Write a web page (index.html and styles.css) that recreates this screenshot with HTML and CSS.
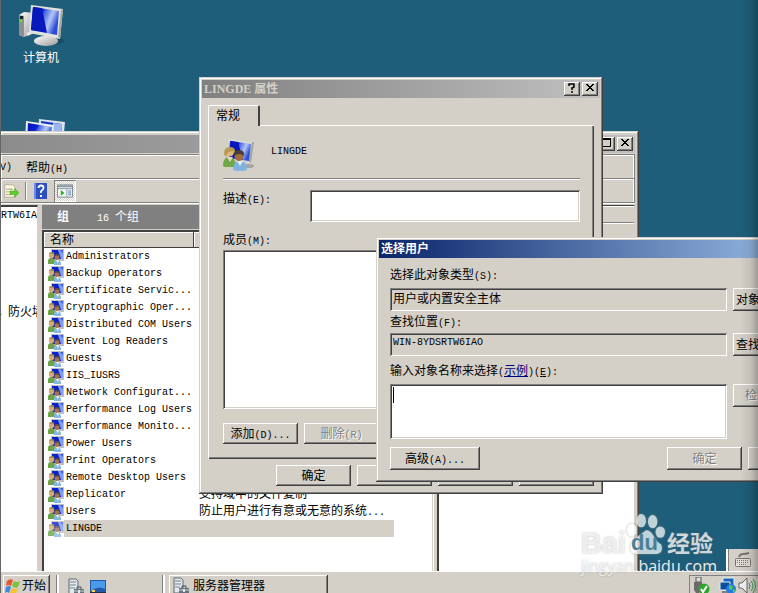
FILE: index.html
```html
<!DOCTYPE html>
<html lang="zh-CN">
<head>
<meta charset="utf-8">
<title>服务器管理器</title>
<link rel="stylesheet" href="styles.css">
</head>
<body>
<svg class="defs" aria-hidden="true">
  <defs>
    <linearGradient id="screen" x1="0" y1="0" x2="1" y2="0.4">
      <stop offset="0" stop-color="#0414a8"/><stop offset="0.42" stop-color="#0a22d8"/>
      <stop offset="0.46" stop-color="#3a5ae0"/><stop offset="0.75" stop-color="#b4c6f6"/><stop offset="1" stop-color="#2a4cd8"/>
    </linearGradient>
    <linearGradient id="metal" x1="0" y1="0" x2="1" y2="1">
      <stop offset="0" stop-color="#fff"/><stop offset="1" stop-color="#9a9a9a"/>
    </linearGradient>
    <symbol id="monitor" viewBox="0 0 46 42">
      <path d="M1 10l5-3 11 1v20l-11 4-5-2z" fill="url(#metal)"/>
      <path d="M1 10l5 1v21l-5-2z" fill="#8d9090"/>
      <path d="M2 11h3v3H2z" fill="#222"/><circle cx="2.800" cy="16" r="1.500" fill="#62e21c"/>
      <path d="M8 28l6-2 2 1-6 4z" fill="#e8e8e8"/>
      <ellipse cx="33" cy="36" rx="13" ry="4" fill="#123e55" opacity=".55"/>
      <path d="M26 29l10 2-1 6h-8z" fill="#c8c8c8"/>
      <ellipse cx="28" cy="36" rx="12" ry="5" fill="url(#metal)"/>
      <path d="M13 0l32 4-3 30-31-6z" fill="#e2e2dc"/>
      <path d="M45 4l-3 30-2-2 3-27z" fill="#a6a6a0"/>
      <path d="M15 2l26 4-2 24-26-5z" fill="url(#screen)"/>
      <path d="M15 2l9 1 5 25-16-3z" fill="#0718bc"/>
    </symbol>
    <symbol id="group" viewBox="0 0 32 32">
      <path d="M5 0l26 3-3 21-19-3z" fill="#d9d9d4"/>
      <path d="M31 3l-3 21-2-1 3-20z" fill="#a3a39d"/>
      <path d="M7 2l21 3-2 17-20-3z" fill="url(#screen)"/>
      <path d="M7 2l8 1 5 18-13-2z" fill="#0718bc"/>
      <ellipse cx="26" cy="27" rx="5" ry="2" fill="#a8a59e"/>
      <path d="M0 27q0-9 6-9t7 8v2H1z" fill="#72a84a"/>
      <path d="M4 18l3 5 3-5z" fill="#e6dcb4"/>
      <circle cx="6.500" cy="13" r="4.500" fill="#dfb785"/>
      <path d="M1 15q0-7 6-7t5 6l-2-2q-4 0-6 3l-1 3z" fill="#b99a4e"/>
      <path d="M10 31q0-9 7-9t7 9q-7 2-14 0z" fill="#7eb2df"/>
      <path d="M14 22l3 5 3-5z" fill="#e3eef8"/>
      <circle cx="16" cy="17.500" r="4.500" fill="#a06d43"/>
      <path d="M11 17q-1-6 5-6t5 6q-4-4-10 0z" fill="#4a4038"/>
    </symbol>
    <symbol id="group-small" viewBox="0 0 16 16">
      <path d="M3 0h13v12H4z" fill="#bfc0c4"/>
      <path d="M4 1h11v9H4z" fill="#0c22c4"/><path d="M10 1h5v9h-2z" fill="#7f9cf0"/><path d="M12 1h3v3z" fill="#3a5ae0"/>
      <path d="M0 15v-3q0-3 3-3t4 3v3z" fill="#6fa346"/>
      <circle cx="3.500" cy="6.500" r="2.700" fill="#d3ab76"/>
      <path d="M1 5q0-2 3-2t2 2q-3-1-5 0z" fill="#99813f"/>
      <path d="M6 16v-2q0-3 3-3t4 3v2z" fill="#86b8e4"/><path d="M8 11h3l-1 3z" fill="#f0f5fa"/>
      <circle cx="9" cy="8.500" r="2.500" fill="#a5744c"/>
      <path d="M6 7q0-2 3-2t3 2q-3-1-6 0z" fill="#5a4a3c"/>
    </symbol>
    <symbol id="server" viewBox="0 0 16 18">
      <path d="M1 1h7l2 2v13H1z" fill="#e4e8ea" stroke="#5d6870"/>
      <path d="M2 4h6M2 7h6M2 10h5" stroke="#768491"/>
      <path d="M6 11h10v6H6z" fill="#66737e"/>
      <path d="M9 11V9h4v2" fill="none" stroke="#434e58"/>
      <path d="M6 13h10" stroke="#c5d2dc"/><path d="M10 12h2v3h-2z" fill="#e2e8ec"/>
    </symbol>
    <symbol id="close" viewBox="0 0 12 10"><path d="M2 1l7 7M3 1l7 7M9 1L2 8M10 1L3 8" stroke="#000" fill="none"/></symbol>
  </defs>
</svg>

<main class="desktop">
  <div class="shortcut shortcut-computer"><svg class="icon-large"><use href="#monitor"/></svg><span>计算机</span></div>
  <svg class="shortcut-network" viewBox="0 0 40 24" aria-hidden="true">
    <path d="M14 0l26 3-2 21H13z" fill="#dfe3ea"/><path d="M16 2l21 3-1 19H16z" fill="#1636c8"/><path d="M28 4l9 1-1 19h-8z" fill="#9cb7ee"/>
    <path d="M1 2l28 4-2 18H0z" fill="#eceee8"/><path d="M3 4l24 4-2 16H2z" fill="url(#screen)"/>
  </svg>

  <section class="window manager" aria-label="服务器管理器">
    <header class="titlebar inactive">
      <button class="cap" aria-label="最大化"><svg viewBox="0 0 12 10"><path d="M1.500 0v8.500h8V0" fill="none" stroke="#000"/><path d="M1 1h9" stroke="#000" stroke-width="2"/></svg></button>
      <button class="cap cap-last" aria-label="关闭"><svg><use href="#close"/></svg></button>
    </header>
    <div class="bars">
      <nav class="menubar"><span class="en">V)</span><span>帮助<span class="en">(H)</span></span></nav>
      <div class="toolbar">
        <button class="tool" aria-label="导出列表"><svg viewBox="0 0 18 16"><path d="M2 1h9l3 3v11H2z" fill="#fff9df" stroke="#aaa79b"/><path d="M4 6h1M4 9h1M4 12h1" stroke="#222"/><path d="M6 6h5M6 9h3M6 12h3" stroke="#8e8470"/><path d="M8 8h5V5l5 5-5 5v-3H8z" fill="#5ccc26" stroke="#37941b" stroke-width=".5"/></svg></button>
        <span class="tool-split"></span>
        <button class="tool" aria-label="帮助"><svg viewBox="0 0 14 16"><path d="M0 0h13v16H0z" fill="#2d4fc0"/><path d="M0 0h2v16H0z" fill="#6f8ce6"/><path d="M4.500 5q0-2.500 2.500-2.500t2.500 2.300q0 1.500-1.500 2.500t-1 2.700" fill="none" stroke="#fff" stroke-width="1.800"/><path d="M6 12h2v2H6z" fill="#fff"/></svg></button>
        <button class="tool pressed" aria-label="显示操作窗格"><svg viewBox="0 0 17 14"><path d="M.5.5h16v13H.5z" fill="#f4f4f0" stroke="#7d858d"/><path d="M1 1h15v2H1z" fill="#8795a4"/><path d="M1 4.500h15M10.500 5v8" stroke="#8795a4"/><path d="M4 6l4 3-4 3z" fill="#35ae28"/><path d="M12 7h3M12 9h3M12 11h3" stroke="#3a78c9"/></svg></button>
      </div>
    </div>
    <div class="panes">
      <aside class="tree"><p class="en">RTW6IA</p><p class="firewall"><span class="en">s </span>防火墙</p></aside>
      <section class="result">
        <h2 class="result-head"><b>组</b><span><span class="en">16 </span>个组</span></h2>
        <div class="list">
          <table>
            <colgroup><col class="c-icon"><col class="c-name"><col class="c-desc"><col></colgroup>
            <thead><tr><th colspan="2">名称</th><th></th><th></th></tr></thead>
            <tbody>
              <tr><td><svg><use href="#group-small"/></svg></td><td class="en">Administrators</td><td></td><td></td></tr>
              <tr><td><svg><use href="#group-small"/></svg></td><td class="en">Backup Operators</td><td></td><td></td></tr>
              <tr><td><svg><use href="#group-small"/></svg></td><td class="en">Certificate Servic...</td><td></td><td></td></tr>
              <tr><td><svg><use href="#group-small"/></svg></td><td class="en">Cryptographic Oper...</td><td></td><td></td></tr>
              <tr><td><svg><use href="#group-small"/></svg></td><td class="en">Distributed COM Users</td><td></td><td></td></tr>
              <tr><td><svg><use href="#group-small"/></svg></td><td class="en">Event Log Readers</td><td></td><td></td></tr>
              <tr><td><svg><use href="#group-small"/></svg></td><td class="en">Guests</td><td></td><td></td></tr>
              <tr><td><svg><use href="#group-small"/></svg></td><td class="en">IIS_IUSRS</td><td></td><td></td></tr>
              <tr><td><svg><use href="#group-small"/></svg></td><td class="en">Network Configurat...</td><td></td><td></td></tr>
              <tr><td><svg><use href="#group-small"/></svg></td><td class="en">Performance Log Users</td><td></td><td></td></tr>
              <tr><td><svg><use href="#group-small"/></svg></td><td class="en">Performance Monito...</td><td></td><td></td></tr>
              <tr><td><svg><use href="#group-small"/></svg></td><td class="en">Power Users</td><td></td><td></td></tr>
              <tr><td><svg><use href="#group-small"/></svg></td><td class="en">Print Operators</td><td></td><td></td></tr>
              <tr><td><svg><use href="#group-small"/></svg></td><td class="en">Remote Desktop Users</td><td></td><td></td></tr>
              <tr><td><svg><use href="#group-small"/></svg></td><td class="en">Replicator</td><td>支持域中的文件复制</td><td></td></tr>
              <tr><td><svg><use href="#group-small"/></svg></td><td class="en">Users</td><td>防止用户进行有意或无意的系统<span class="en">...</span></td><td></td></tr>
              <tr class="selected"><td><svg><use href="#group-small"/></svg></td><td class="en">LINGDE</td><td></td><td></td></tr>
            </tbody>
          </table>
        </div>
      </section>
      <aside class="actions"><div class="actions-bar"></div><div class="actions-bar"></div></aside>
    </div>
  </section>

  <section class="window properties" role="dialog" aria-labelledby="prop-title">
    <header class="titlebar inactive">
      <h1 id="prop-title"><span class="en">LINGDE </span>属性</h1>
      <button class="cap" aria-label="帮助"><svg viewBox="0 0 12 10"><path d="M3 3V1h5v3L6 5v2M6 8v2" stroke="#000" stroke-width="1.500" fill="none"/></svg></button>
      <button class="cap cap-last" aria-label="关闭"><svg><use href="#close"/></svg></button>
    </header>
    <div class="prop-body">
      <button class="tab" role="tab" aria-selected="true">常规</button>
      <div class="panel">
        <div class="group-head"><svg><use href="#group"/></svg><span class="en">LINGDE</span></div>
        <div class="field-row"><label for="desc">描述<span class="en">(E):</span></label><input id="desc" class="sunken" type="text"></div>
        <label class="members-label" for="members">成员<span class="en">(M):</span></label>
        <select id="members" class="sunken members" size="8"></select>
        <div class="buttons"><button class="btn">添加<span class="en">(D)...</span></button><button class="btn" disabled>删除<span class="en">(R)</span></button></div>
      </div>
      <footer class="buttons prop-footer"><button class="btn">确定</button><button class="btn" aria-label="取消"></button><button class="btn" aria-label="应用"></button><button class="btn" aria-label="帮助"></button></footer>
    </div>
  </section>

  <section class="window picker" role="dialog" aria-labelledby="pick-title">
    <header class="titlebar active"><h1 id="pick-title">选择用户</h1></header>
    <div class="picker-body">
      <label for="otype">选择此对象类型<span class="en">(S):</span></label>
      <div class="picker-row type-row"><input id="otype" class="sunken readonly" readonly value="用户或内置安全主体"><button class="btn btn-wide">对象类型<span class="en">(O)...</span></button></div>
      <label for="loc">查找位置<span class="en">(F):</span></label>
      <div class="picker-row"><input id="loc" class="sunken readonly en" readonly value="WIN-8YDSRTW6IAO"><button class="btn btn-wide">查找范围<span class="en">(L)...</span></button></div>
      <label class="names-label" for="names">输入对象名称来选择<span class="en">(</span><a href="#names">示例</a><span class="en">)(<u>E</u>):</span></label>
      <div class="picker-row names-row"><div class="names-box"><textarea id="names" class="sunken"></textarea><i class="caret"></i></div><button class="btn btn-wide" disabled>检查名称<span class="en">(C)</span></button></div>
      <footer class="buttons"><button class="btn btn-wide">高级<span class="en">(A)...</span></button><button class="btn push" disabled>确定</button><button class="btn" aria-label="取消"></button></footer>
    </div>
  </section>

  <div class="langbar"><svg viewBox="0 0 18 16" aria-label="键盘"><path d="M5 5q1-3 4-3t6-1" fill="none" stroke="#77746e" stroke-width="2"/><rect x="1.500" y="6.500" width="15" height="8" rx="1" fill="#e2dfd8" stroke="#77746e"/><path d="M3 8.500h12M3 10.500h12M5 12.500h8" stroke="#77746e" stroke-dasharray="1 1"/></svg></div>
</main>

<footer class="taskbar">
  <button class="task start"><svg viewBox="0 0 16 16"><path d="M2 3q3-3 6-1L6 8Q3 6 1 8z" fill="#e8562a"/><path d="M9 3q3 2 6 0l-2 6q-3 2-6-1z" fill="#7cc142"/><path d="M1 9q3-2 5 0l-2 6q-2-2-4 0z" fill="#3f88dc"/><path d="M7 10q3 2 6 0l-2 5q-3 2-6 0z" fill="#f6c12b"/></svg>开始</button>
  <div class="quick"><svg class="srv"><use href="#server"/></svg><svg class="desk" viewBox="0 0 16 14"><path d="M0 0h16v14H0z" fill="#2559a7"/><path d="M1 1h14v8Q8 5 1 11z" fill="#4b9ae8"/><path d="M0 12h16v2H0z" fill="#222f48"/><path d="M2 10h3v2H2z" fill="#ffd84a"/></svg></div>
  <button class="task app"><svg class="srv"><use href="#server"/></svg>服务器管理器</button>
  <div class="tray">
    <svg viewBox="0 0 18 18"><path d="M4 0h5v5H4z" fill="#ddd" stroke="#555"/><path d="M2 5h8v8l-3 3H4l-2-3z" fill="#6b6b6b"/><circle cx="12" cy="12" r="5.500" fill="#2ea52b"/><path d="M9 12l2 3 4-6" fill="none" stroke="#fff" stroke-width="2"/></svg>
    <svg class="net" viewBox="0 0 18 18"><path d="M4 1h11v8H4z" fill="#1767bd" stroke="#e6eef6"/><path d="M1 5h10v8H1z" fill="#0a4f9f" stroke="#e6eef6"/><path d="M3 15h6" stroke="#234"/><circle cx="12" cy="12" r="5" fill="#227be0"/><path d="M10 8l4 1-1 4-3-1zM14 12l3 1-3 3z" fill="#4fcb42"/></svg>
    <svg viewBox="0 0 18 18"><path d="M1 6h3l5-5v15l-5-5H1z" fill="#f3f3f3" stroke="#666"/><path d="M11 6q2 3 0 6M13 4q4 5 0 10M15 2q5 7 0 14" fill="none" stroke="#3b9c50"/></svg>
  </div>
</footer>
<div class="watermark">
  <div class="wm-logo"><span>Bai</span>
    <svg viewBox="0 0 42 44" aria-hidden="true"><g fill="#fff"><ellipse cx="16" cy="8" rx="5" ry="7"/><ellipse cx="28" cy="9" rx="5" ry="7"/><ellipse cx="6" cy="18" rx="5" ry="7"/><ellipse cx="36" cy="20" rx="5" ry="6"/><path d="M21 18q5 0 8 6t8 9q3 10-7 10H12q-9 0-7-10 2-4 7-8t9-7z"/></g></svg>
    <b class="du">du</b><span class="wm-cn">经验</span></div>
  <div class="wm-url">jingyan<span class="wm-domain">.baidu.com</span></div>
</div>
<div class="edge-shade"></div>
</body>
</html>
```
FILE: styles.css
```css
* { box-sizing: border-box; }

:root {
  --face: #d4d0c8;
  --shadow: #808080;
  --dark: #404040;
  --raised: inset -1px -1px var(--dark), inset 1px 1px #fff, inset -2px -2px var(--shadow);
}

body {
  margin: 0;
  height: 100vh;
  display: flex;
  flex-direction: column;
  overflow: hidden;
  position: relative;
  background: #1e5e7a;
  color: #000;
  font: 12px/18px "Liberation Sans", "Noto Sans CJK SC", sans-serif;
  white-space: nowrap;
}

button, input, select, textarea { font: inherit; color: inherit; margin: 0; border: 0; border-radius: 0; outline: 0; }
h1, h2, p { margin: 0; font-size: 12px; font-weight: normal; }
svg { display: block; flex: none; }
.defs { position: absolute; width: 0; height: 0; }
.en { font-family: "Liberation Mono", monospace; font-size: 10px; white-space: pre; }
span.en { line-height: 10px; }

.desktop { position: relative; flex: 1; min-height: 0; overflow: hidden; }

/* Desktop shortcuts */
.shortcut { position: absolute; display: flex; flex-direction: column; align-items: center; gap: 2px; color: #fff; }
.shortcut-computer { left: 18px; top: 5px; }
.icon-large { width: 46px; height: 42px; }
.shortcut-network { position: absolute; left: 25px; top: 119px; width: 40px; height: 24px; }

/* Window frame */
.window {
  position: absolute;
  display: flex;
  flex-direction: column;
  padding: 3px;
  background: var(--face);
  box-shadow: inset -1px -1px var(--dark), inset 1px 1px var(--face), inset -2px -2px var(--shadow), inset 2px 2px #fff;
}
.titlebar { display: flex; align-items: center; height: 18px; flex: none; padding: 0 2px; }
.titlebar h1 { flex: 1; font-weight: bold; }
.titlebar h1 .en { font-size: 12px; font-family: "Liberation Serif", serif; }
.inactive { background: linear-gradient(90deg, #808080, #c0c0c0); color: var(--face); justify-content: flex-end; }
.active { background: linear-gradient(90deg, #0a246a, #a6caf0); color: #fff; }
.cap { width: 16px; height: 14px; padding: 1px 2px 3px; background: var(--face); box-shadow: var(--raised); }
.cap svg { width: 12px; height: 10px; }
.cap-last { margin-left: 2px; }

/* Server manager */
.manager { left: 0; top: 131px; width: 639px; bottom: -4px; padding: 4px 4px 4px 0; }
.manager .inactive { background: linear-gradient(90deg, #8b8b8b, #c0c0c0); }
.bars { margin: 1px 0 2px; border: 1px solid var(--shadow); border-left: 0; box-shadow: inset -1px 1px #fff, 0 1px #fff; }
.menubar { display: flex; gap: 14px; height: 24px; padding-top: 4px; border-bottom: 1px solid var(--shadow); }
.menubar > .en { line-height: 18px; }
.toolbar { display: flex; align-items: center; height: 23px; border-top: 1px solid #fff; }
.tool { display: flex; align-items: center; justify-content: center; width: 22px; height: 22px; padding: 0; background: none; }
.tool svg { width: 16px; height: 16px; }
.tool-split { width: 2px; height: 18px; margin: 0 3px; border-left: 1px solid var(--shadow); border-right: 1px solid #fff; }
.pressed { margin-left: 2px; background: repeating-conic-gradient(#fff 0 25%, var(--face) 0 50%) 0 0 / 2px 2px; box-shadow: inset 1px 1px var(--shadow), inset -1px -1px #fff; }

.panes { flex: 1; min-height: 0; display: grid; grid-template-columns: 38px 392px 1fr; column-gap: 4px; }
.tree { overflow: hidden; padding-left: 1px; background: #fff; border-top: 2px solid var(--dark); border-right: 1px solid var(--face); }
.tree .firewall { margin-top: 78px; text-indent: -5px; }
.result { display: flex; flex-direction: column; min-width: 0; overflow: hidden; border-right: 1px solid #fff; }
.result-head { display: flex; gap: 28px; height: 24px; padding: 3px 15px; background: var(--shadow); color: #fff; }
.list { flex: 1; margin-top: 1px; background: #fff; border-top: 2px solid var(--dark); border-left: 2px solid var(--dark); border-right: 1px solid var(--face); }
.list table { table-layout: fixed; width: 100%; border-collapse: collapse; line-height: 17px; }
.list th { height: 16px; padding: 0 0 0 6px; line-height: 16px; font-weight: normal; text-align: left; background: var(--face); box-shadow: inset -1px -1px var(--dark), inset 1px 1px #fff; }
.list td { height: 17px; padding: 0 0 0 2px; line-height: 17px; }
.list td:first-child { padding: 0 0 0 4px; }
.list td:nth-child(3) { padding-left: 5px; }
.list svg { width: 16px; height: 16px; }
.c-icon { width: 20px; }
.c-name { width: 130px; }
.c-desc { width: 200px; }
.selected td:nth-child(2), .selected td:nth-child(3) { background: var(--face); }
.selected svg { opacity: .8; }
.actions { margin-left: -1px; background: #fff; border-left: 2px solid var(--dark); border-top: 1px solid var(--dark); border-right: 1px solid var(--face); }
.actions-bar { height: 17px; background: var(--face); border-top: 1px solid #fff; border-bottom: 1px solid var(--shadow); }

/* Controls */
.btn { width: 75px; height: 21px; padding: 0; background: var(--face); box-shadow: var(--raised); line-height: 20px; text-align: center; }
.btn-wide { width: 90px; }
.btn:disabled { color: var(--shadow); text-shadow: 1px 1px #fff; }
.buttons { display: flex; gap: 6px; }
.sunken { background: #fff; box-shadow: inset 1px 1px var(--shadow), inset -1px -1px #fff, inset 2px 2px var(--dark), inset -2px -2px var(--face); }

/* Group properties */
.properties { left: 199px; top: 77px; width: 404px; height: 417px; }
.prop-body { padding: 7px 6px; }
.tab { position: relative; display: block; width: 52px; height: 21px; padding: 0 0 0 7px; margin-bottom: -1px; text-align: left; background: var(--face); border: 1px solid #fff; border-right: 2px solid var(--dark); border-bottom: 0; border-radius: 2px 2px 0 0; }
.panel { padding: 13px 14px 15px; border-top: 1px solid #fff; border-left: 1px solid #fff; box-shadow: inset -1px -1px var(--dark), inset -2px -2px var(--shadow); }
.group-head { display: flex; align-items: center; gap: 16px; padding-bottom: 7px; border-bottom: 1px solid var(--shadow); box-shadow: 0 1px #fff; }
.group-head svg { width: 32px; height: 32px; }
.group-head .en { padding-bottom: 6px; }
.field-row { display: flex; align-items: flex-start; margin-top: 11px; }
.field-row label { width: 87px; }
.field-row input { flex: 1; min-width: 0; height: 32px; padding: 3px; }
.members-label { display: block; margin-top: 9px; }
.members { display: block; width: 100%; height: 159px; margin: 1px 0 14px; }
.prop-footer { margin-top: 6px; justify-content: flex-end; }

/* User picker */
.picker { left: 376px; top: 237px; width: 458px; height: 245px; }
.picker-body { padding: 8px 8px 0 11px; }
.picker-body label { display: block; height: 18px; }
.picker-body a { color: #000080; }
.picker-row { display: flex; gap: 6px; margin: 2px 0; }
.type-row { margin-top: 4px; }
.picker-row + .names-label { margin-top: 6px; }
.picker-row > input, .names-box { width: 337px; }
.picker .btn { height: 23px; }
.readonly { height: 23px; padding: 0 3px 4px; background: var(--face); box-shadow: inset 1px 1px var(--shadow), inset -1px -1px #fff, inset 2px 2px var(--dark); }
.names-row { margin: 4px 0 8px; }
.names-box { position: relative; height: 55px; }
.names-box textarea { display: block; width: 100%; height: 100%; padding: 3px; resize: none; }
.caret { position: absolute; left: 3px; top: 3px; width: 1px; height: 16px; background: #000; }
.push { margin-left: auto; }

/* Language bar and watermark */
.langbar { position: absolute; right: 0; bottom: 0; display: flex; align-items: center; width: 32px; height: 22px; padding-left: 6px; background: var(--face); border-left: 2px solid #fff; box-shadow: inset 1px 0 var(--shadow); }
.langbar svg { width: 18px; height: 16px; }
.watermark { position: absolute; right: 41px; bottom: 17px; color: rgba(255, 255, 255, .75); text-shadow: 0 0 2px rgba(110, 110, 110, .5); pointer-events: none; }
.wm-logo { display: flex; align-items: flex-end; height: 44px; font: bold 29px/26px "Liberation Sans", sans-serif; }
.wm-logo svg { width: 40px; height: 44px; opacity: .72; filter: drop-shadow(0 0 1px #888); }
.du { position: relative; width: 30px; margin-left: -35px; margin-right: 6px; font: bold 22px/26px "Liberation Sans", sans-serif; color: #4a7f98; text-shadow: none; }
.wm-cn { font: bold 23px/28px "Noto Sans CJK SC", sans-serif; }
.wm-url { font: 16px/20px "Open Sans", sans-serif; }
.wm-domain { color: rgba(255, 255, 255, .9); }

/* Taskbar */
.taskbar { position: relative; display: flex; align-items: flex-start; height: 22px; flex: none; padding: 3px 0 0 3px; overflow: hidden; background: var(--face); border-top: 1px solid #fff; }
.task { display: flex; align-items: center; gap: 4px; height: 24px; padding: 0 4px 3px; background: var(--face); box-shadow: var(--raised); }
.start { width: 47px; gap: 1px; padding-left: 2px; }
.start svg { width: 16px; height: 16px; }
.quick { display: flex; gap: 6px; width: 108px; height: 24px; margin: 0 4px 0 7px; padding: 3px 0 0 9px; border-left: 2px solid #fff; border-right: 2px solid #fff; box-shadow: -1px 0 var(--shadow), inset -1px 0 var(--shadow); }
.srv { width: 16px; height: 18px; }
.desk { width: 16px; height: 14px; margin-top: 2px; }
.app { width: 159px; }
.tray { display: flex; gap: 1px; width: 69px; height: 24px; margin-left: auto; padding: 2px 0 0 3px; box-shadow: inset 1px 1px var(--shadow); }
.tray svg { width: 18px; height: 18px; }
.tray .net { margin-left: 8px; }

.edge-shade { position: absolute; inset: 0; pointer-events: none; border-left: 1px solid #666; background: linear-gradient(90deg, transparent, rgba(0, 0, 0, .08) 60%, rgba(0, 0, 0, .26)) right / 18px 100% no-repeat; }
```
